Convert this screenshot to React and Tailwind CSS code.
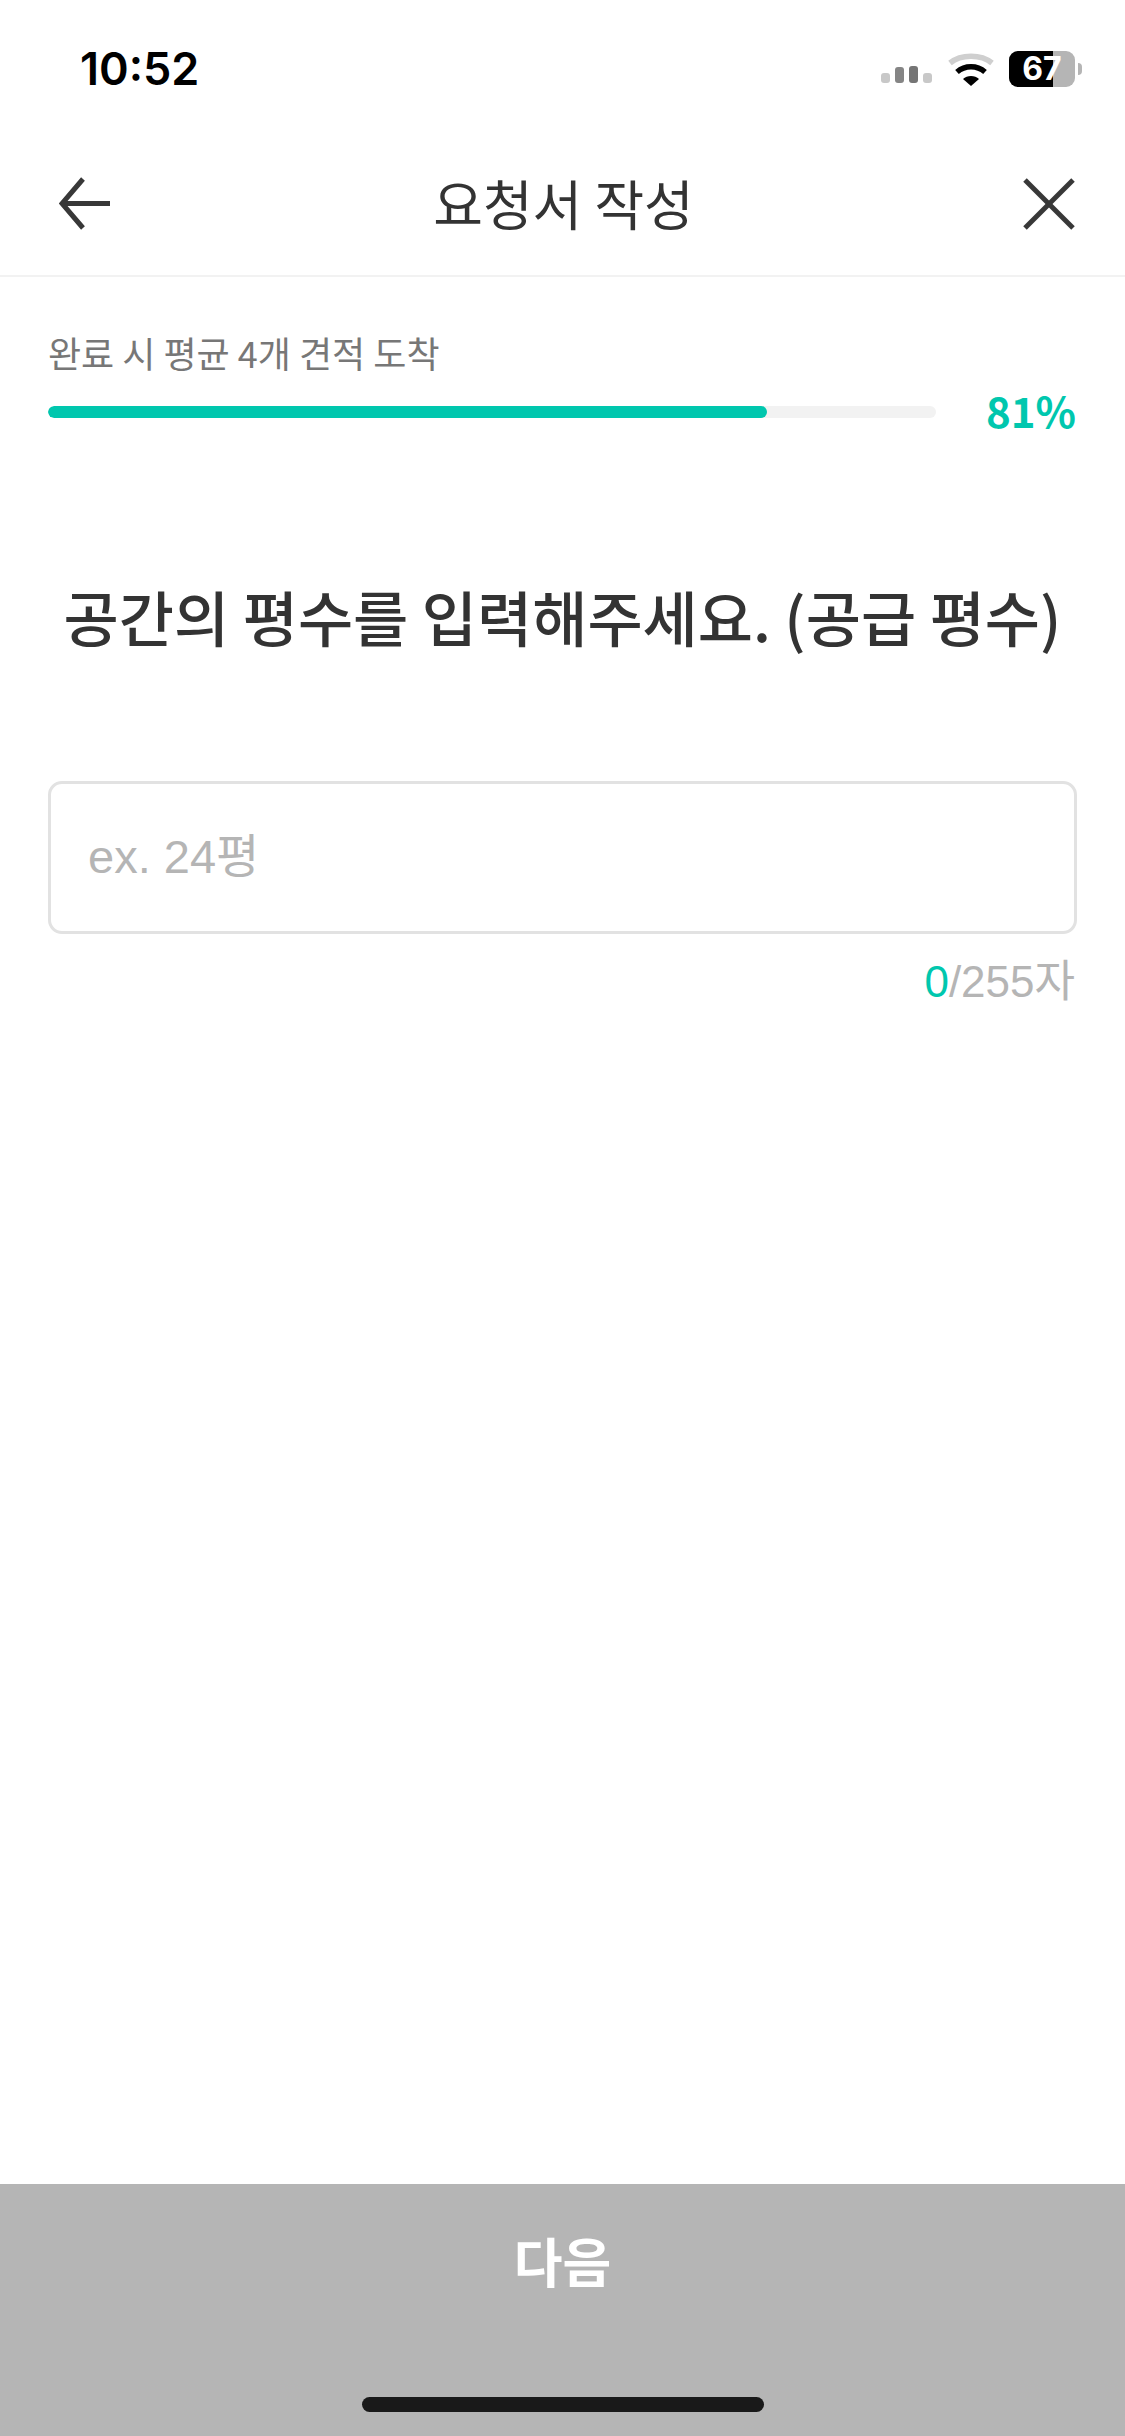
export default function App() {
  return (
    <div className="w-[1125px] h-[2436px] bg-white flex flex-col overflow-hidden font-['Noto_Sans_CJK_KR','Noto_Sans',sans-serif] text-[#333333]">
      {/* status bar */}
      <div className="h-[92px] shrink-0 flex items-start justify-between pl-[80px] pr-[43px]">
        <span className="mt-[43px] text-[45px] leading-[52px] font-semibold text-black font-['Inter',sans-serif]">10:52</span>
        <div className="flex items-start mt-[31px]">
          <div className="flex items-end gap-[5px] h-[54px] pb-[2px] mr-[15px] w-[52px]">
            <span className="w-[9px] h-[10px] rounded-[3px] bg-[#c8c8c8]" />
            <span className="w-[9px] h-[16px] rounded-[3px] bg-[#858585]" />
            <span className="w-[9px] h-[17px] rounded-[3px] bg-[#757575]" />
            <span className="w-[9px] h-[10px] rounded-[3px] bg-[#c8c8c8]" />
          </div>
          <svg width="46" height="34" viewBox="0 0 46 34" className="mt-[21px] mr-[15px]">
            <path d="M2 11 C13 2 33 2 44 11" fill="none" stroke="#cfcfcf" strokeWidth="5.5" />
            <path d="M9 20 C17 13 29 13 37 20" fill="none" stroke="#000" strokeWidth="5.5" />
            <path d="M15 27 C19 23 27 23 31 27 L23 34 Z" fill="#000" />
          </svg>
          <div className="relative mt-[20px] w-[66px] h-[36px] rounded-[9px] bg-[#b5b5b5] flex">
            <div className="w-[44px] h-full rounded-l-[9px] bg-black" />
            <span className="absolute inset-0 flex items-center justify-center text-white font-bold text-[32px] leading-none font-['Inter',sans-serif]">67</span>
          </div>
          <div className="mt-[32px] ml-[3px] w-[4px] h-[12px] rounded-r-full bg-[#b5b5b5]" />
        </div>
      </div>

      {/* header */}
      <header className="h-[185px] shrink-0 flex items-center justify-between pl-[59px] pr-[48px] border-b-[2px] border-[#f2f2f2] pt-[39px]">
        <svg width="52" height="54" viewBox="0 0 52 54" fill="none" stroke="#383838" strokeWidth="5" className="mt-[2px]">
          <path d="M24 2 L3 26.500 L24 51" />
          <path d="M3 26.500 H51" />
        </svg>
        <h1 className="text-[54px] leading-[70px] font-normal text-[#333333] ml-[-7px]">요청서 작성</h1>
        <svg width="52" height="52" viewBox="0 0 52 52" fill="none" stroke="#383838" strokeWidth="5" className="mt-[2px] mr-[2px]">
          <path d="M2 2 L50 50" />
          <path d="M50 2 L2 50" />
        </svg>
      </header>

      {/* progress */}
      <section className="px-[48px] pt-[53px] flex items-end gap-[50px]">
        <div className="w-[888px]">
          <p className="text-[36px] leading-[44px] text-[#777777]">완료 시 평균 4개 견적 도착</p>
          <div className="mt-[32px] h-[12px] rounded-full bg-[#f2f2f2] overflow-hidden">
            <div className="w-[719px] h-full rounded-full bg-[#00c7ae]" />
          </div>
        </div>
        <span className="text-[42px] leading-[48px] font-bold text-[#00c7ae] mb-[-16px]">81%</span>
      </section>

      {/* question */}
      <h2 className="mt-[158px] text-center text-[60px] leading-[80px] font-medium text-[#333333] whitespace-nowrap">
        공간의 평수를 입력해주세요. (공급 평수)
      </h2>

      {/* input */}
      <div className="mt-[125px] px-[48px]">
        <input
          readOnly
          placeholder="ex. 24평"
          className="w-[1029px] h-[153px] px-[37px] pb-[2px] rounded-[14px] border-[3px] border-[#e2e2e2] bg-white outline-none text-[47px] placeholder:text-[#b5b5b5] font-['Liberation_Sans','Noto_Sans_CJK_KR',sans-serif]"
        />
        <p className="mt-[21px] text-right text-[44px] leading-[54px] text-[#b5b5b5] pr-[2px] font-['Liberation_Sans','Noto_Sans_CJK_KR',sans-serif]">
          <span className="text-[#00c7ae]">0</span>/255자
        </p>
      </div>

      {/* bottom */}
      <div className="mt-auto h-[252px] shrink-0 bg-[#b5b5b5] flex flex-col items-center">
        <span className="mt-[40px] text-[53px] leading-[72px] font-bold text-white">다음</span>
        <div className="mt-[101px] w-[402px] h-[15px] rounded-full bg-[#191919]" />
      </div>
    </div>
  );
}
